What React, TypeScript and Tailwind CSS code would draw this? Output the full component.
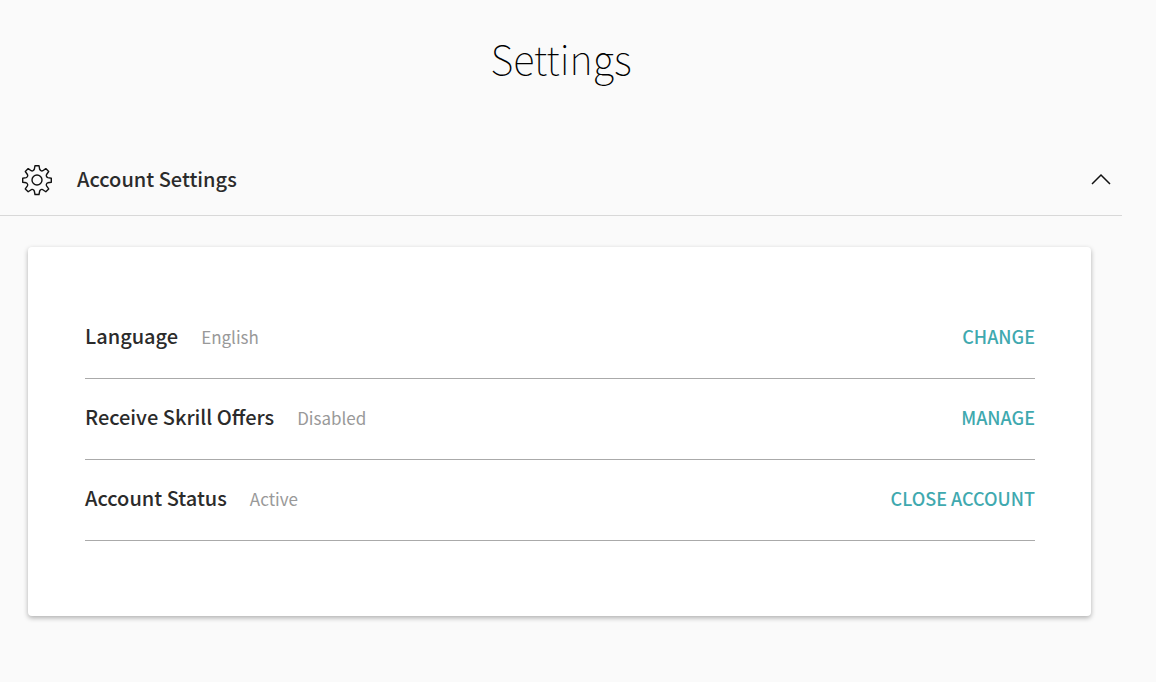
import { useState } from "react";

type Row = { label: string; value: string; action: string };

const rows: Row[] = [
  { label: "Language", value: "English", action: "CHANGE" },
  { label: "Receive Skrill Offers", value: "Disabled", action: "MANAGE" },
  { label: "Account Status", value: "Active", action: "CLOSE ACCOUNT" },
];

function GearIcon() {
  return (
    <svg viewBox="0 0 32 32" className="size-8" fill="none" stroke="#111" strokeWidth="1.4" strokeLinejoin="round" aria-hidden="true">
      <path d="M14 1.700h4l.7 3.600q.3 1 1.200 1.400 1 .5 1.900 0l3-2.100 2.900 2.900-2.100 3q-.6.900-.1 1.900.4.900 1.300 1.200l3.500.6v4l-3.500.6q-1 .3-1.300 1.200-.5 1 .1 1.900l2.100 3-2.900 2.900-3-2.100q-.9-.6-1.900-.1-.9.400-1.200 1.400l-.7 3.500h-4l-.7-3.500q-.3-1-1.200-1.400-1-.5-1.900.1l-3 2.100-2.900-2.900 2.100-3q.6-.9.100-1.900-.4-.9-1.300-1.200l-3.500-.6v-4l3.500-.6q1-.3 1.300-1.200.5-1-.1-1.900l-2.100-3 2.900-2.900 3 2.100q.9.500 1.900 0 .9-.4 1.200-1.400z" />
      <circle cx="16" cy="16" r="5" />
    </svg>
  );
}

export default function App() {
  const [open, setOpen] = useState(true);
  return (
    <main className="min-h-screen bg-[#fafafa] pr-[34px] font-['Noto_Sans_CJK_SC',sans-serif] text-[#2b2b2b]">
      <h1 className="pt-7 text-center text-[40px] leading-[60px] font-thin text-black">Settings</h1>
      <section className="pt-14">
        <h2 className="border-b border-[#d8d8d8]">
          <button type="button" aria-expanded={open} onClick={() => setOpen(!open)} className="flex h-[71px] w-full items-center pr-[11px] pl-[21px] text-left">
            <GearIcon />
            <span className="flex-1 pb-0.5 pl-6 text-xl leading-7 font-medium">Account Settings</span>
            <svg viewBox="0 0 20 12" className="mb-0.5 h-3 w-5" fill="none" stroke="#111" strokeWidth="1.5" aria-hidden="true">
              <path d="M1 11l9-9 9 9" />
            </svg>
          </button>
        </h2>
        {open && (
          <div className="mt-[31px] mr-[31px] ml-7 rounded-sm bg-white pt-[51px] pr-14 pb-[75px] pl-[57px] shadow-[0_2px_5px_rgba(0,0,0,0.3)]">
            {rows.map((row) => (
              <div key={row.label} className="flex h-[81px] items-baseline border-b border-[#aaa] pt-6">
                <span className="text-xl leading-7 font-medium">{row.label}</span>
                <span className="pl-[23px] text-[17px] leading-7 text-[#999]">{row.value}</span>
                <button type="button" className="ml-auto text-lg leading-7 font-medium text-[#3fa9af]">{row.action}</button>
              </div>
            ))}
          </div>
        )}
      </section>
    </main>
  );
}
